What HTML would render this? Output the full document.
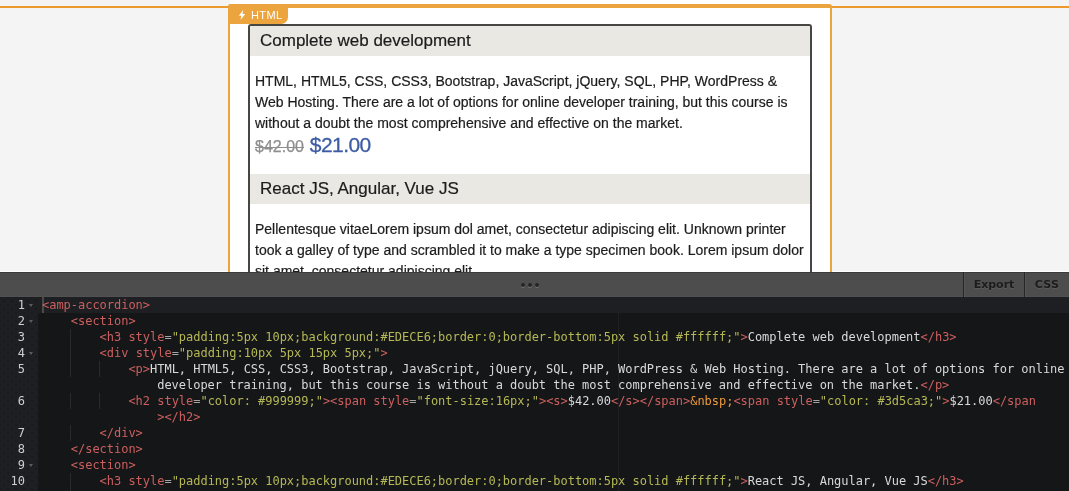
<!DOCTYPE html>
<html lang="en">
<head>
<meta charset="utf-8">
<title>Editor</title>
<style>
*{box-sizing:border-box;margin:0;padding:0}
html,body{width:1069px;height:491px;overflow:hidden;background:#fff}
.bg{position:absolute;left:0;top:0;width:1069px;height:271px;background:#f4f4f4}
body{position:relative;font-family:"Liberation Sans",Arial,Helvetica,sans-serif;font-size:14px;line-height:21px;color:#222}
.col{position:absolute;left:230px;top:0;width:600px;height:270px;background:#fff}
.topline{position:absolute;left:0;top:6px;width:1069px;height:2px;background:#ec9a2e}
.frame{position:absolute;left:228px;top:4px;width:604px;height:300px;background:#fff;border:2px solid #eba43e;border-top-width:4px;border-radius:3px 3px 0 0}
.tag{position:absolute;left:228px;top:4px;width:60px;height:20px;background:#eba43e;border-radius:3px 0 7px 0;color:#fff;font-size:11px;line-height:19px;letter-spacing:.4px}
.tag svg{position:absolute;left:10px;top:6px}
.tag span{position:absolute;left:23px;top:2px}
.acc{position:absolute;left:248px;top:24px;width:564px;height:300px;border:2px solid #464642;border-radius:3px;background:#fff;overflow:hidden}
.acc h3{font-weight:normal;font-size:17px;line-height:19.6px;height:34.6px;padding:5px 10px;background:#e9e8e2;border-bottom:5px solid #fff;color:#1c1c1c;-webkit-text-stroke:0.2px #1c1c1c}
.acc .c{padding:10px 5px 15px 5px}
.acc p{line-height:21px;color:#1c1c1c;-webkit-text-stroke:0.2px #1c1c1c}
.acc h2{font-weight:normal;font-size:21px;line-height:21px;height:25.5px;color:#8e8e8e;white-space:nowrap}
.acc h2 .o{font-size:16px;-webkit-text-stroke:0.25px #8e8e8e}
.acc h2 .n{color:#3d5ca3;letter-spacing:-0.55px;-webkit-text-stroke:0.3px #3d5ca3}
.panel{position:absolute;left:0;top:272px;width:1069px;height:219px;background:#151618}
.bar{position:absolute;left:0;top:0;width:1069px;height:25px;background:#4d4d4d;border-top:1px solid #3c3c3c;border-bottom:1px solid #515151}
.dots{position:absolute;left:521px;top:10px;width:18px;height:5px}
.dots i{position:absolute;top:0;width:4px;height:4px;background:#242424;border-radius:2px;box-shadow:0 1px 0 rgba(255,255,255,.22)}
.btn{position:absolute;top:-1px;height:25px;border-left:1px solid #262626;box-shadow:inset 1px 0 0 rgba(255,255,255,.05);color:#1c1c1c;font-family:"DejaVu Sans","Liberation Sans",sans-serif;font-weight:bold;font-size:11px;line-height:25px;text-align:center;text-shadow:0 1px 0 rgba(255,255,255,.08)}
.gut{position:absolute;left:0;top:25px;width:38px;height:194px;background-color:#1d1f22;background-image:radial-gradient(circle,#191a1d 0.7px,transparent 1.1px),radial-gradient(circle,#191a1d 0.7px,transparent 1.1px);background-size:8px 8px;background-position:0 0,4px 4px}
.code{position:absolute;left:0;top:25px;width:1069px;height:194px;font-family:"DejaVu Sans Mono","Liberation Mono",monospace;font-size:12px;line-height:16px;letter-spacing:-0.024px;color:#d9d9d9}
.ln{position:absolute;left:0;width:25px;text-align:right;color:#cfcfcf;height:16px;white-space:pre}
.fold{position:absolute;left:29px;width:0;height:0;border-left:2.75px solid transparent;border-right:2.75px solid transparent;border-top:3.5px solid #5c5c5c}
.l{position:absolute;left:42px;height:16px;white-space:pre}
.acc,.code,.tag,.bar{will-change:transform}
.t{color:#cc5f5f}.a{color:#cc5f5f}.s{color:#b5b855}.e{color:#ee9a3c}.q{color:#a4a4a4}
.ig{position:absolute;width:1px;background:#292a2d}
.active{position:absolute;left:38px;top:25px;width:1031px;height:16px;background:#1d1f22}
.cursor{position:absolute;left:42px;top:25px;width:2px;height:16px;background:#4b4c46}
.pm{position:absolute;left:618px;top:41px;width:1px;height:178px;background:#1e2023}
</style>
</head>
<body>
<div class="bg"></div>
<div class="col"></div>
<div class="topline"></div>
<div class="frame"></div>
<div class="acc">
<h3>Complete web development</h3>
<div class="c">
<p>HTML, HTML5, CSS, CSS3, Bootstrap, JavaScript, jQuery, SQL, PHP, WordPress &amp; Web Hosting. There are a lot of options for online developer training, but this course is without a doubt the most comprehensive and effective on the market.</p>
<h2><span class="o"><s>$42.00</s></span>&nbsp;<span class="n">$21.00</span></h2>
</div>
<h3>React JS, Angular, Vue JS</h3>
<div class="c">
<p>Pellentesque vitaeLorem ipsum dol amet, consectetur adipiscing elit. Unknown printer took a galley of type and scrambled it to make a type specimen book. Lorem ipsum dolor sit amet, consectetur adipiscing elit.</p>
</div>
</div>
<div class="tag"><svg width="8" height="10" viewBox="0 0 8 9" preserveAspectRatio="none"><path d="M5.2 0L0.8 5.1h2.5L2.5 9 7.2 3.5H4.6z" fill="#fff"/></svg><span>HTML</span></div>
<div class="panel">
<div class="bar">
<div class="dots"><i style="left:0"></i><i style="left:7px"></i><i style="left:14px"></i></div>
<div class="btn" style="left:963px;width:61px">Export</div>
<div class="btn" style="left:1024px;width:45px;letter-spacing:.3px">CSS</div>
</div>
<div class="gut"></div>
<div class="active"></div>
<div class="pm"></div>
<div class="cursor"></div>
<div class="code">
<div class="ig" style="left:70px;top:32px;height:32px"></div>
<div class="ig" style="left:70px;top:64px;height:16px"></div><div class="ig" style="left:99px;top:64px;height:16px"></div>
<div class="ig" style="left:70px;top:96px;height:16px"></div><div class="ig" style="left:99px;top:96px;height:16px"></div>
<div class="ig" style="left:70px;top:128px;height:16px"></div>
<div class="ig" style="left:70px;top:176px;height:18px"></div>
<div class="ln" style="top:0">1</div><div class="fold" style="top:7px"></div>
<div class="ln" style="top:16px">2</div><div class="fold" style="top:23px"></div>
<div class="ln" style="top:32px">3</div>
<div class="ln" style="top:48px">4</div><div class="fold" style="top:55px"></div>
<div class="ln" style="top:64px">5</div>
<div class="ln" style="top:96px">6</div>
<div class="ln" style="top:128px">7</div>
<div class="ln" style="top:144px">8</div>
<div class="ln" style="top:160px">9</div><div class="fold" style="top:167px"></div>
<div class="ln" style="top:176px">10</div>
<div class="l" style="top:0"><span class="t">&lt;amp-accordion&gt;</span></div>
<div class="l" style="top:16px">    <span class="t">&lt;section&gt;</span></div>
<div class="l" style="top:32px">        <span class="t">&lt;h3</span> <span class="a">style</span><span class="q">=</span><span class="s">"padding:5px 10px;background:#EDECE6;border:0;border-bottom:5px solid #ffffff;"</span><span class="t">&gt;</span>Complete web development<span class="t">&lt;/h3&gt;</span></div>
<div class="l" style="top:48px">        <span class="t">&lt;div</span> <span class="a">style</span><span class="q">=</span><span class="s">"padding:10px 5px 15px 5px;"</span><span class="t">&gt;</span></div>
<div class="l" style="top:64px">            <span class="t">&lt;p&gt;</span>HTML, HTML5, CSS, CSS3, Bootstrap, JavaScript, jQuery, SQL, PHP, WordPress &amp; Web Hosting. There are a lot of options for online</div>
<div class="l" style="top:80px">                developer training, but this course is without a doubt the most comprehensive and effective on the market.<span class="t">&lt;/p&gt;</span></div>
<div class="l" style="top:96px">            <span class="t">&lt;h2</span> <span class="a">style</span><span class="q">=</span><span class="s">"color: #999999;"</span><span class="t">&gt;&lt;span</span> <span class="a">style</span><span class="q">=</span><span class="s">"font-size:16px;"</span><span class="t">&gt;&lt;s&gt;</span>$42.00<span class="t">&lt;/s&gt;&lt;/span&gt;</span><span class="e">&amp;nbsp;</span><span class="t">&lt;span</span> <span class="a">style</span><span class="q">=</span><span class="s">"color: #3d5ca3;"</span><span class="t">&gt;</span>$21.00<span class="t">&lt;/span</span></div>
<div class="l" style="top:112px">                <span class="t">&gt;&lt;/h2&gt;</span></div>
<div class="l" style="top:128px">        <span class="t">&lt;/div&gt;</span></div>
<div class="l" style="top:144px">    <span class="t">&lt;/section&gt;</span></div>
<div class="l" style="top:160px">    <span class="t">&lt;section&gt;</span></div>
<div class="l" style="top:176px">        <span class="t">&lt;h3</span> <span class="a">style</span><span class="q">=</span><span class="s">"padding:5px 10px;background:#EDECE6;border:0;border-bottom:5px solid #ffffff;"</span><span class="t">&gt;</span>React JS, Angular, Vue JS<span class="t">&lt;/h3&gt;</span></div>
</div>
</div>
</body>
</html>
